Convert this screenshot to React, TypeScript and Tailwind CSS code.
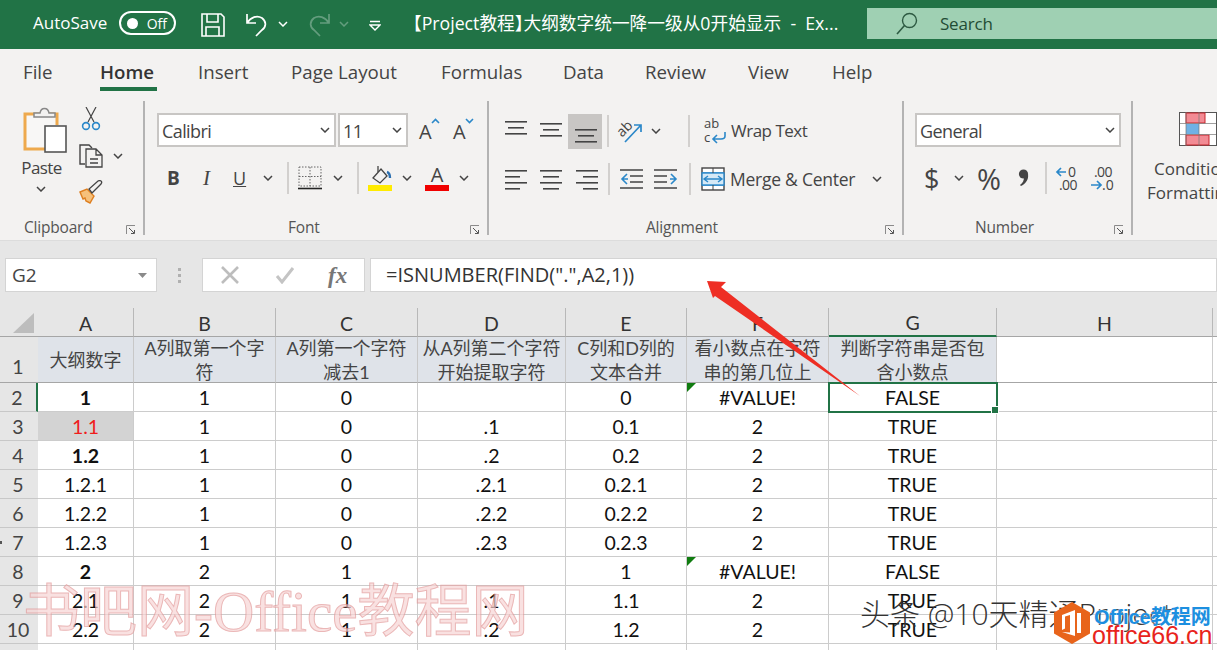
import React from "react";

const ui = "font-['Open_Sans','Noto_Sans_CJK_SC',sans-serif]";
const cellFont = "font-['Lato','Noto_Sans_CJK_SC',sans-serif]";

const Chev = ({ className = "", color = "#444" }: { className?: string; color?: string }) => (
  <svg width="10" height="6" viewBox="0 0 10 6" className={className}>
    <path d="M1 1l4 4 4-4" fill="none" stroke={color} strokeWidth="1.5" />
  </svg>
);

const Launcher = () => (
  <svg width="10" height="10" viewBox="0 0 10 10" className="mt-[4px] shrink-0">
    <path d="M.5 9V.5H9" fill="none" stroke="#8a8a8a" />
    <path d="M3 3l5 5M5 8.5h3.5V5" fill="none" stroke="#555" />
  </svg>
);

const VSep = ({ h = 32, className = "" }: { h?: number; className?: string }) => (
  <div className={`w-[2px] bg-[#d2d0ce] shrink-0 ${className}`} style={{ height: h }} />
);

// three or four rule lines, used by every alignment button
const Lines = ({ rows, className = "" }: { rows: [number, number, number][]; className?: string }) => (
  <svg width="24" height="22" viewBox="0 0 24 22" className={className}>
    {rows.map(([x, w, y], i) => (
      <rect key={i} x={x} y={y} width={w} height="1.6" fill="#444" />
    ))}
  </svg>
);

const Combo = ({ w, label, className = "" }: { w: number; label: string; className?: string }) => (
  <div
    className={`h-[34px] bg-white border-2 border-[#c8c6c4] flex items-center justify-between pl-[3px] pr-[4px] text-[18px] tracking-[-0.6px] text-[#444] ${className}`}
    style={{ width: w }}
  >
    <span className="pt-[2px]">{label}</span>
    <Chev />
  </div>
);

const Group = ({
  w,
  label,
  labelPad,
  children,
}: {
  w: number;
  label: string;
  labelPad: number;
  children: React.ReactNode;
}) => (
  <div className="h-[134px] border-r-2 border-[#b3b3b3] flex flex-col shrink-0" style={{ width: w }}>
    <div className="flex-1 min-h-0">{children}</div>
    <div className="h-[14px] flex items-center justify-between pr-[7px] text-[15.5px] tracking-[-0.2px] text-[#555]">
      <span style={{ paddingLeft: labelPad }}>{label}</span>
      <Launcher />
    </div>
  </div>
);

const TitleBar = () => (
  <div className="h-[49px] bg-[#217346] flex items-center text-white shrink-0 overflow-hidden">
    <span className="ml-[33px] text-[17px] w-[76px] whitespace-nowrap -mt-[3px]">AutoSave</span>
    <div className="ml-[10px] w-[57px] h-[24px] -mt-[3px] rounded-full border-2 border-white flex items-center justify-between pl-[6px] pr-[7px]">
      <div className="w-[11px] h-[11px] rounded-full bg-white" />
      <span className="text-[14px]">Off</span>
    </div>
    <svg width="26" height="26" viewBox="0 0 26 26" className="ml-[24px] mt-[1px]">
      <path d="M2 2h19l3 3v19H2z M7 2v8h11V2 M6 24v-9h13v9" fill="none" stroke="#fff" strokeWidth="1.6" />
    </svg>
    <svg width="24" height="26" viewBox="0 0 24 26" className="ml-[19px]">
      <path d="M2 2v9h9 M2 11c4-6 10-8 15-5 5 4 4 9 0 12l-6 6" fill="none" stroke="#fff" strokeWidth="1.7" />
    </svg>
    <Chev color="#fff" className="ml-[9px] -mt-[2px]" />
    <svg width="24" height="26" viewBox="0 0 24 26" className="ml-[19px] opacity-30">
      <path d="M22 2v9h-9 M22 11c-4-6-10-8-15-5-5 4-4 9 0 12l6 6" fill="none" stroke="#fff" strokeWidth="1.7" />
    </svg>
    <Chev color="#fff" className="ml-[8px] -mt-[2px] opacity-30" />
    <svg width="12" height="12" viewBox="0 0 12 12" className="ml-[20px] mt-[3px]">
      <path d="M1 1.500h10M1 5h10L6 10z" fill="none" stroke="#fff" strokeWidth="1.4" />
    </svg>
    <span className="ml-[31px] w-[429px] text-[17.7px] -mt-[3px] whitespace-nowrap">
      <span className="-ml-[8px]">【</span>Project教程<span className="tracking-[-9px]">】</span>
      大纲数字统一降一级从0开始显示 &nbsp;-&nbsp; Ex...
    </span>
    <div className="ml-[26px] h-[31px] -mt-[2px] flex-1 bg-[#9fd0b3] flex items-center text-[#1f4d35]">
      <svg width="24" height="24" viewBox="0 0 24 24" className="ml-[28px]">
        <circle cx="14.500" cy="8.500" r="7" fill="none" stroke="#2d5a42" strokeWidth="1.4" />
        <path d="M9.500 13.500L2 22" stroke="#2d5a42" strokeWidth="1.6" />
      </svg>
      <span className="ml-[21px] text-[17px] tracking-[-0.2px]">Search</span>
    </div>
  </div>
);

const tabs: [string, number][] = [
  ["File", 23],
  ["Home", 100],
  ["Insert", 198],
  ["Page Layout", 291],
  ["Formulas", 441],
  ["Data", 563],
  ["Review", 645],
  ["View", 748],
  ["Help", 832],
];

const TabBar = () => (
  <div className="h-[42px] bg-[#f3f2f1] flex items-start shrink-0 text-[18.7px] text-[#444] pt-[9px]">
    {tabs.map(([t, x], i) => {
      const next = tabs[i + 1] ? tabs[i + 1][1] : x + 60;
      return (
        <div key={t} className="shrink-0" style={{ width: next - x, marginLeft: i === 0 ? x : 0 }}>
          <span
            className={
              t === "Home"
                ? "inline-block font-semibold text-[#333] border-b-[5px] border-[#217346] h-[33px] leading-[25px] w-[57px]"
                : "inline-block leading-[25px] whitespace-nowrap"
            }
          >
            {t}
          </span>
        </div>
      );
    })}
  </div>
);

const Clipboard = () => (
  <Group w={145} label="Clipboard" labelPad={24}>
    <div className="flex pt-[5px]">
      <div className="ml-[21px] w-[46px] flex flex-col items-center">
        <svg width="46" height="47" viewBox="0 0 46 47">
          <path d="M36 19V8H4v35h20" fill="#f8f7f6" stroke="#eea94d" strokeWidth="3" />
          <path d="M13 11V7h6c1-6 8-6 9 0h6v4z" fill="#f3f2f1" stroke="#888" strokeWidth="1.5" />
          <rect x="24" y="20" width="21" height="26" fill="#fff" stroke="#555" strokeWidth="1.6" />
        </svg>
        <span className="text-[17px] text-[#444] leading-[24px] mt-[3px] -ml-[5px] tracking-[-0.6px]">Paste</span>
        <Chev className="mt-[6px] -ml-[6px]" />
      </div>
      <div className="ml-[12px] flex flex-col">
        <svg width="24" height="24" viewBox="0 0 24 24" className="mt-[1px]">
          <path d="M7 0l8 15M17 0L9 15" stroke="#444" strokeWidth="1.2" fill="none" />
          <circle cx="7" cy="19" r="3.400" fill="none" stroke="#2b88c9" strokeWidth="1.6" />
          <circle cx="17" cy="19" r="3.400" fill="none" stroke="#2b88c9" strokeWidth="1.6" />
        </svg>
        <div className="flex items-center mt-[13px]">
          <svg width="24" height="24" viewBox="0 0 24 24">
            <path d="M6 20H1V1h9l3 3" fill="none" stroke="#444" strokeWidth="1.4" />
            <path d="M7 5h10l6 6v12H7z M17 5v6h6 M11 15h8M11 19h8" fill="#f3f2f1" stroke="#444" strokeWidth="1.3" />
          </svg>
          <Chev className="ml-[10px]" />
        </div>
        <svg width="24" height="24" viewBox="0 0 24 24" className="mt-[12px]">
          <path d="M1 12l7-3 7 7-4 7-4-2-1-3-2 1z" fill="#f6c07a" stroke="#de7f20" strokeWidth="1.4" />
          <path d="M10 9l3 4 9-9c2-3-1-4-3-3z" fill="#f3f2f1" stroke="#444" strokeWidth="1.3" />
        </svg>
      </div>
    </div>
  </Group>
);

const GrowA = ({ up, className = "" }: { up: boolean; className?: string }) => (
  <div className={`w-[21px] h-[24px] flex items-start relative ${className}`}>
    <span className="text-[20px] leading-[24px] text-[#444] mt-[2px]">A</span>
    <svg width="9" height="6" viewBox="0 0 9 6" className="absolute right-0 top-0">
      <path d={up ? "M1 5l3.500-3.500L8 5" : "M1 1l3.500 3.500L8 1"} fill="none" stroke="#2b88c9" strokeWidth="1.6" />
    </svg>
  </div>
);

const Font = () => (
  <Group w={344} label="Font" labelPad={143}>
    <div className="flex items-center pt-[12px] pl-[12px]">
      <Combo w={179} label="Calibri" />
      <Combo w={70} label="11" className="ml-[2px]" />
      <GrowA up className="ml-[11px]" />
      <GrowA up={false} className="ml-[13px]" />
    </div>
    <div className="flex items-center h-[34px] mt-[14px] pl-[22px] text-[19px] text-[#444]">
      <span className="font-bold w-[13px] leading-none">B</span>
      <span className="italic font-['Liberation_Serif',serif] ml-[23px] w-[9px] text-[21px] leading-none">I</span>
      <span className="underline ml-[21px] w-[14px] leading-none text-[18px]">U</span>
      <Chev className="ml-[16px]" />
      <VSep h={32} className="ml-[14px]" />
      <svg width="24" height="24" viewBox="0 0 24 24" className="ml-[9px]">
        <rect x="1" y="1" width="22" height="19" fill="none" stroke="#666" strokeDasharray="1.5 1.5" />
        <path d="M12 1v19M1 10.500h22" stroke="#666" strokeDasharray="1.5 1.5" />
        <path d="M0 22.500h24" stroke="#222" strokeWidth="1.6" />
      </svg>
      <Chev className="ml-[11px]" />
      <VSep h={32} className="ml-[14px]" />
      <svg width="24" height="26" viewBox="0 0 24 26" className="ml-[9px]">
        <path d="M5 13l8-9 6 7-7 7z" fill="#f3f2f1" stroke="#444" strokeWidth="1.3" />
        <path d="M10 7V1" stroke="#444" strokeWidth="1.3" />
        <path d="M19 7c3 1 3 4 3 6" stroke="#2b6fb0" strokeWidth="2.4" fill="none" />
        <rect x="0" y="20" width="24" height="6" fill="#ffeb00" />
      </svg>
      <Chev className="ml-[10px]" />
      <div className="ml-[13px] w-[24px] h-[26px] flex flex-col items-center">
        <span className="text-[20px] leading-[20px] h-[20px]">A</span>
        <div className="w-[24px] h-[6px] bg-[#f00000]" />
      </div>
      <Chev className="ml-[10px]" />
    </div>
  </Group>
);

const Alignment = () => (
  <Group w={415} label="Alignment" labelPad={157}>
    <div className="flex pl-[16px] pt-[12px] h-[36px] items-center box-content">
      <Lines rows={[[0, 22, 5], [3, 16, 11], [0, 22, 17]]} className="-mt-[8px]" />
      <Lines rows={[[0, 22, 5], [3, 16, 11], [0, 22, 17]]} className="ml-[11px] -mt-[4px]" />
      <div className="ml-[4px] w-[34px] h-[35px] bg-[#c8c6c4] flex items-center justify-center">
        <Lines rows={[[1, 22, 8], [4, 16, 14], [1, 22, 20]]} className="mt-[2px] ml-[1px]" />
      </div>
      <VSep h={32} className="ml-[5px]" />
      <svg width="26" height="26" viewBox="0 0 26 26" className="ml-[9px] overflow-visible">
        <text x="-1" y="16" fontSize="14" fill="#444" transform="rotate(-45 6 12)" fontFamily="Open Sans">ab</text>
        <path d="M7 24L23 7M16 7h7v7" fill="none" stroke="#2b88c9" strokeWidth="1.7" />
      </svg>
      <Chev className="ml-[7px]" />
      <VSep h={32} className="ml-[27px]" />
      <svg width="24" height="28" viewBox="0 0 24 28" className="ml-[13px] overflow-visible">
        <text x="1" y="11" fontSize="13" fill="#444" fontFamily="Open Sans">ab</text>
        <text x="1" y="25" fontSize="13" fill="#444" fontFamily="Open Sans">c</text>
        <path d="M22 15v4c0 2-2 3-4 3h-7M14 18l-4 4 4 4" fill="none" stroke="#2b88c9" strokeWidth="1.6" />
      </svg>
      <span className="ml-[4px] text-[17px] tracking-[-0.5px] text-[#444] whitespace-nowrap">Wrap Text</span>
    </div>
    <div className="flex pl-[16px] mt-[13px] h-[34px] items-center">
      <Lines rows={[[0, 22, 2], [0, 15, 8], [0, 22, 14], [0, 15, 20]]} />
      <Lines rows={[[0, 22, 2], [3, 16, 8], [0, 22, 14], [3, 16, 20]]} className="ml-[11px]" />
      <Lines rows={[[1, 22, 2], [8, 15, 8], [1, 22, 14], [8, 15, 20]]} className="ml-[11px]" />
      <VSep h={32} className="ml-[9px]" />
      <svg width="24" height="22" viewBox="0 0 24 22" className="ml-[10px]">
        <path d="M0 2h23M10 8h13M10 14h13M0 20h23" stroke="#444" strokeWidth="1.6" />
        <path d="M7 6L2 11l5 5M2 11h6" fill="none" stroke="#2b88c9" strokeWidth="1.6" />
      </svg>
      <svg width="24" height="22" viewBox="0 0 24 22" className="ml-[10px]">
        <path d="M0 2h23M0 8h13M0 14h13M0 20h23" stroke="#444" strokeWidth="1.6" />
        <path d="M17 6l5 5-5 5M22 11h-6" fill="none" stroke="#2b88c9" strokeWidth="1.6" />
      </svg>
      <VSep h={32} className="ml-[11px]" />
      <svg width="24" height="24" viewBox="0 0 24 24" className="ml-[10px]">
        <rect x="1" y="1" width="22" height="22" fill="#fff" stroke="#444" strokeWidth="1.4" />
        <path d="M1 6h22M1 18h22" stroke="#2b88c9" strokeWidth="1.4" />
        <rect x="1" y="6" width="22" height="12" fill="#d5e9f6" stroke="#2b88c9" strokeWidth="1.4" />
        <path d="M3 12h18M7 9l-4 3 4 3M17 9l4 3-4 3" fill="none" stroke="#2b88c9" strokeWidth="1.4" />
        <path d="M12 1v5M12 18v5" stroke="#444" />
      </svg>
      <span className="ml-[5px] w-[126px] text-[17.5px] tracking-[-0.25px] text-[#444] whitespace-nowrap">Merge &amp; Center</span>
      <Chev className="ml-[16px]" />
    </div>
  </Group>
);

const Number = () => (
  <Group w={229} label="Number" labelPad={71}>
    <div className="pt-[12px] pl-[11px]">
      <Combo w={206} label="General" />
    </div>
    <div className="flex items-center h-[34px] mt-[14px] pl-[20px] text-[#444]">
      <span className="text-[27px] leading-none w-[14px]">$</span>
      <Chev className="ml-[16px]" />
      <span className="text-[29px] leading-none ml-[13px] w-[24px] tracking-[-2px]">%</span>
      <svg width="11" height="18" viewBox="0 0 11 18" className="ml-[17px]">
        <circle cx="5.500" cy="5" r="4.600" fill="#444" />
        <path d="M10 5c1 6-3 10-7 12l-1-1c3-2 4-5 4-8z" fill="#444" />
      </svg>
      <VSep h={32} className="ml-[16px]" />
      <svg width="25" height="28" viewBox="0 0 25 28" className="ml-[9px] overflow-visible">
        <path d="M10 8H1M5 4L1 8l4 4" fill="none" stroke="#2b88c9" strokeWidth="1.7" />
        <text x="12" y="13" fontSize="14" fill="#444" fontFamily="Open Sans">0</text>
        <text x="3" y="26" fontSize="14" fill="#444" letterSpacing="-0.6" fontFamily="Open Sans">.00</text>
      </svg>
      <svg width="25" height="28" viewBox="0 0 25 28" className="ml-[9px] overflow-visible">
        <text x="4" y="13" fontSize="14" fill="#444" letterSpacing="-0.6" fontFamily="Open Sans">.00</text>
        <path d="M1 21h10M7 17l4 4-4 4" fill="none" stroke="#2b88c9" strokeWidth="1.7" />
        <text x="12" y="26" fontSize="14" fill="#444" fontFamily="Open Sans">.0</text>
      </svg>
    </div>
  </Group>
);

const Conditional = () => (
  <div className="flex-1 h-[134px] overflow-hidden relative">
    <div className="flex flex-col items-start pl-[14px]">
      <svg width="38" height="34" viewBox="0 0 38 34" className="ml-[32px] mt-[11px]">
        <rect x=".5" y=".5" width="37" height="33" fill="#fff" stroke="#555" />
        <rect x="7" y="1" width="19" height="10" fill="#f28b94" stroke="#c8242c" />
        <rect x="7" y="12" width="13" height="10" fill="#6fb1e4" />
        <rect x="7" y="23" width="23" height="10" fill="#f28b94" stroke="#c8242c" />
        <path d="M7 0v34M20 0v34M1 11.500h36M1 22.500h36" stroke="#777" strokeWidth=".7" />
      </svg>
      <span className="text-[17px] text-[#444] leading-[24px] mt-[11px] ml-[7px] whitespace-nowrap">Conditional</span>
      <span className="text-[17px] text-[#444] leading-[24px] whitespace-nowrap">Formatting</span>
    </div>
  </div>
);

const FormulaBar = () => (
  <div className="h-[67px] bg-[#e6e6e6] flex pt-[17px] shrink-0">
    <div className="ml-[5px] w-[152px] h-[34px] bg-white border border-[#d4d4d4] flex items-center justify-between pl-[6px] pr-[9px] text-[19px] text-[#444]">
      <span>G2</span>
      <svg width="9" height="5" viewBox="0 0 9 5"><path d="M0 0h9L4.500 5z" fill="#8a8a8a" /></svg>
    </div>
    <div className="w-[45px] h-[34px] flex flex-col items-center justify-center gap-[3px]">
      <div className="w-[3px] h-[3px] bg-[#b0b0b0]" />
      <div className="w-[3px] h-[3px] bg-[#b0b0b0]" />
      <div className="w-[3px] h-[3px] bg-[#b0b0b0]" />
    </div>
    <div className="w-[163px] h-[34px] bg-white border border-[#d4d4d4] flex items-center">
      <svg width="18" height="18" viewBox="0 0 18 18" className="ml-[18px]">
        <path d="M1 1l16 16M17 1L1 17" stroke="#bdbdbd" strokeWidth="2.6" />
      </svg>
      <svg width="20" height="18" viewBox="0 0 20 18" className="ml-[36px]">
        <path d="M2 10l5 6L18 2" fill="none" stroke="#c4c4c4" strokeWidth="3" />
      </svg>
      <span className="ml-[33px] text-[23px] italic font-bold text-[#777] font-['Liberation_Serif',serif] leading-none">fx</span>
    </div>
    <div className="ml-[5px] flex-1 h-[34px] bg-white border border-[#d4d4d4] flex items-center pl-[15px] text-[20px] text-[#333]">
      =ISNUMBER(FIND(&quot;.&quot;,A2,1))
    </div>
  </div>
);

const columns = ["A", "B", "C", "D", "E", "F", "G", "H"];
const heads = [
  "大纲数字",
  "A列取第一个字\n符",
  "A列第一个字符\n减去1",
  "从A列第二个字符\n开始提取字符",
  "C列和D列的\n文本合并",
  "看小数点在字符\n串的第几位上",
  "判断字符串是否包\n含小数点",
];
const rows: string[][] = [
  ["1", "1", "0", "", "0", "#VALUE!", "FALSE"],
  ["1.1", "1", "0", ".1", "0.1", "2", "TRUE"],
  ["1.2", "1", "0", ".2", "0.2", "2", "TRUE"],
  ["1.2.1", "1", "0", ".2.1", "0.2.1", "2", "TRUE"],
  ["1.2.2", "1", "0", ".2.2", "0.2.2", "2", "TRUE"],
  ["1.2.3", "1", "0", ".2.3", "0.2.3", "2", "TRUE"],
  ["2", "2", "1", "", "1", "#VALUE!", "FALSE"],
  ["2.1", "2", "1", ".1", "1.1", "2", "TRUE"],
  ["2.2", "2", "1", ".2", "1.2", "2", "TRUE"],
];
const boldRows = [0, 2, 6];

const Sheet = () => (
  <div
    className={`grid grid-cols-[38px_96px_142px_142px_148px_121px_142px_168px_216px_4px] grid-rows-[29px_46px_repeat(9,29px)_6px] flex-1 bg-white text-[19.5px] text-[#111] ${cellFont}`}
  >
    <div className="bg-[#e6e6e6] flex items-end justify-end pr-[4px] pb-[3px] border-b border-[#a6a6a6]">
      <div className="w-0 h-0 border-l-[21px] border-l-transparent border-b-[20px] border-b-[#bdbdbd]" />
    </div>
    {columns.map((c) => (
      <div
        key={c}
        className={`bg-[#e6e6e6] border-r border-[#b8b8b8] flex items-center justify-center pt-[3px] text-[#333] ${
          c === "G" ? "border-b-2 border-b-[#217346] bg-[#dcdcdc]" : "border-b border-b-[#a6a6a6]"
        }`}
      >
        {c}
      </div>
    ))}
    <div className="bg-[#e6e6e6] border-b border-[#a6a6a6]" />

    <div className="bg-[#e6e6e6] border-b border-[#a6a6a6] flex items-end justify-center pb-[1px] pr-[2px] text-[#444]">1</div>
    {heads.map((h) => (
      <div
        key={h}
        className="bg-[#dfe3e9] border-r border-b border-r-[#c8c8c8] border-b-[#a6a6a6] flex items-center justify-center text-center whitespace-pre-line text-[18px] leading-[24px] text-[#444]"
      >
        {h}
      </div>
    ))}
    <div className="border-r border-b border-r-[#cccccc] border-b-[#a6a6a6]" />
    <div className="border-b border-[#a6a6a6]" />

    {rows.map((r, ri) => (
      <React.Fragment key={ri}>
        <div
          className={`bg-[#e6e6e6] border-b border-[#c8c8c8] flex items-center justify-center pr-[2px] pt-[1px] text-[#444] ${
            ri === 0 ? "border-r-2 border-r-[#217346]" : ""
          }`}
        >
          {ri + 2}
        </div>
        {r.map((v, ci) => (
          <div
            key={ci}
            className={`relative border-r border-b border-[#cccccc] flex items-center justify-center pt-[1px] ${
              ci === 0 && ri === 1 ? "bg-[#d3d3d3] text-[#f01c1c]" : ""
            } ${ci === 0 && boldRows.includes(ri) ? "font-bold" : ""} ${
              ri === 0 && ci === 6 ? "outline-2 -outline-offset-1 outline-[#217346] z-10" : ""
            }`}
          >
            {v === "#VALUE!" && (
              <div className="absolute left-0 top-0 w-0 h-0 border-t-[9px] border-t-[#107c10] border-r-[9px] border-r-transparent" />
            )}
            {v}
            {ri === 0 && ci === 6 && (
              <div className="absolute -right-[3px] -bottom-[3px] w-[6px] h-[6px] bg-[#217346] border border-white box-content" />
            )}
          </div>
        ))}
        <div className="border-r border-b border-[#cccccc]" />
        <div className="border-b border-[#cccccc]" />
      </React.Fragment>
    ))}

    <div className="bg-[#e6e6e6]" />
    {columns.map((c) => (
      <div key={c} className="border-r border-[#cccccc]" />
    ))}
    <div />
  </div>
);

const Overlays = () => (
  <>
    <svg width="1217" height="650" viewBox="0 0 1217 650" className="absolute left-0 top-0 z-20 pointer-events-none">
      <path d="M707 281l19 1-5 5 139 109-145-100-2 2z" fill="#ee2e24" />
    </svg>
    <div className="absolute left-0 top-[541px] w-[2px] h-[3px] bg-[#555]" />
    <div className="absolute left-[23px] top-[580px] z-20 text-[57px] leading-[64px] text-[#f7d5d5] opacity-70 whitespace-nowrap font-['Liberation_Serif','Noto_Sans_CJK_SC',serif] [-webkit-text-stroke:1px_#e39a9a] pointer-events-none">
      书吧网<span className="font-bold">-</span>Office教程网
    </div>
    <div className={`absolute left-[860px] top-[594px] z-20 text-[30px] leading-[40px] font-light text-[#333] whitespace-nowrap ${ui}`}>
      头条 @10天精通Project
    </div>
    <svg width="36" height="42" viewBox="0 0 36 42" className="absolute left-[1054px] top-[602px] z-30">
      <path d="M18 0l18 10.500v21L18 42 0 31.500v-21z" fill="#e8641b" />
      <path d="M8 13l13-5v26L8 30l8 .5V13l-5 1.500v12L8 28z" fill="#fff" />
      <path d="M23 11h4v20h-4z" fill="#fff" />
    </svg>
    <div className="absolute left-[1094px] top-[602px] z-30 text-[20px] leading-[30px] font-bold text-[#1c8fe0] whitespace-nowrap font-['Liberation_Sans','Noto_Sans_CJK_SC',sans-serif] [text-shadow:0_0_2px_#fff]">
      Office教程网
    </div>
    <div className="absolute left-[1092px] top-[620px] z-30 text-[25px] leading-[30px] text-[#e8241c] whitespace-nowrap font-['Liberation_Sans',sans-serif] [text-shadow:0_0_2px_#fff]">
      office66.cn
    </div>
  </>
);

const App = () => {
  return (
    <div className={`relative w-[1217px] h-[650px] overflow-hidden flex flex-col ${ui}`}>
      <TitleBar />
      <TabBar />
      <div className="h-[150px] bg-[#f3f2f1] pt-[10px] flex shrink-0 border-b border-[#dcdcdc]">
        <Clipboard />
        <Font />
        <Alignment />
        <Number />
        <Conditional />
      </div>
      <FormulaBar />
      <Sheet />
      <Overlays />
    </div>
  );
};

export default App;
